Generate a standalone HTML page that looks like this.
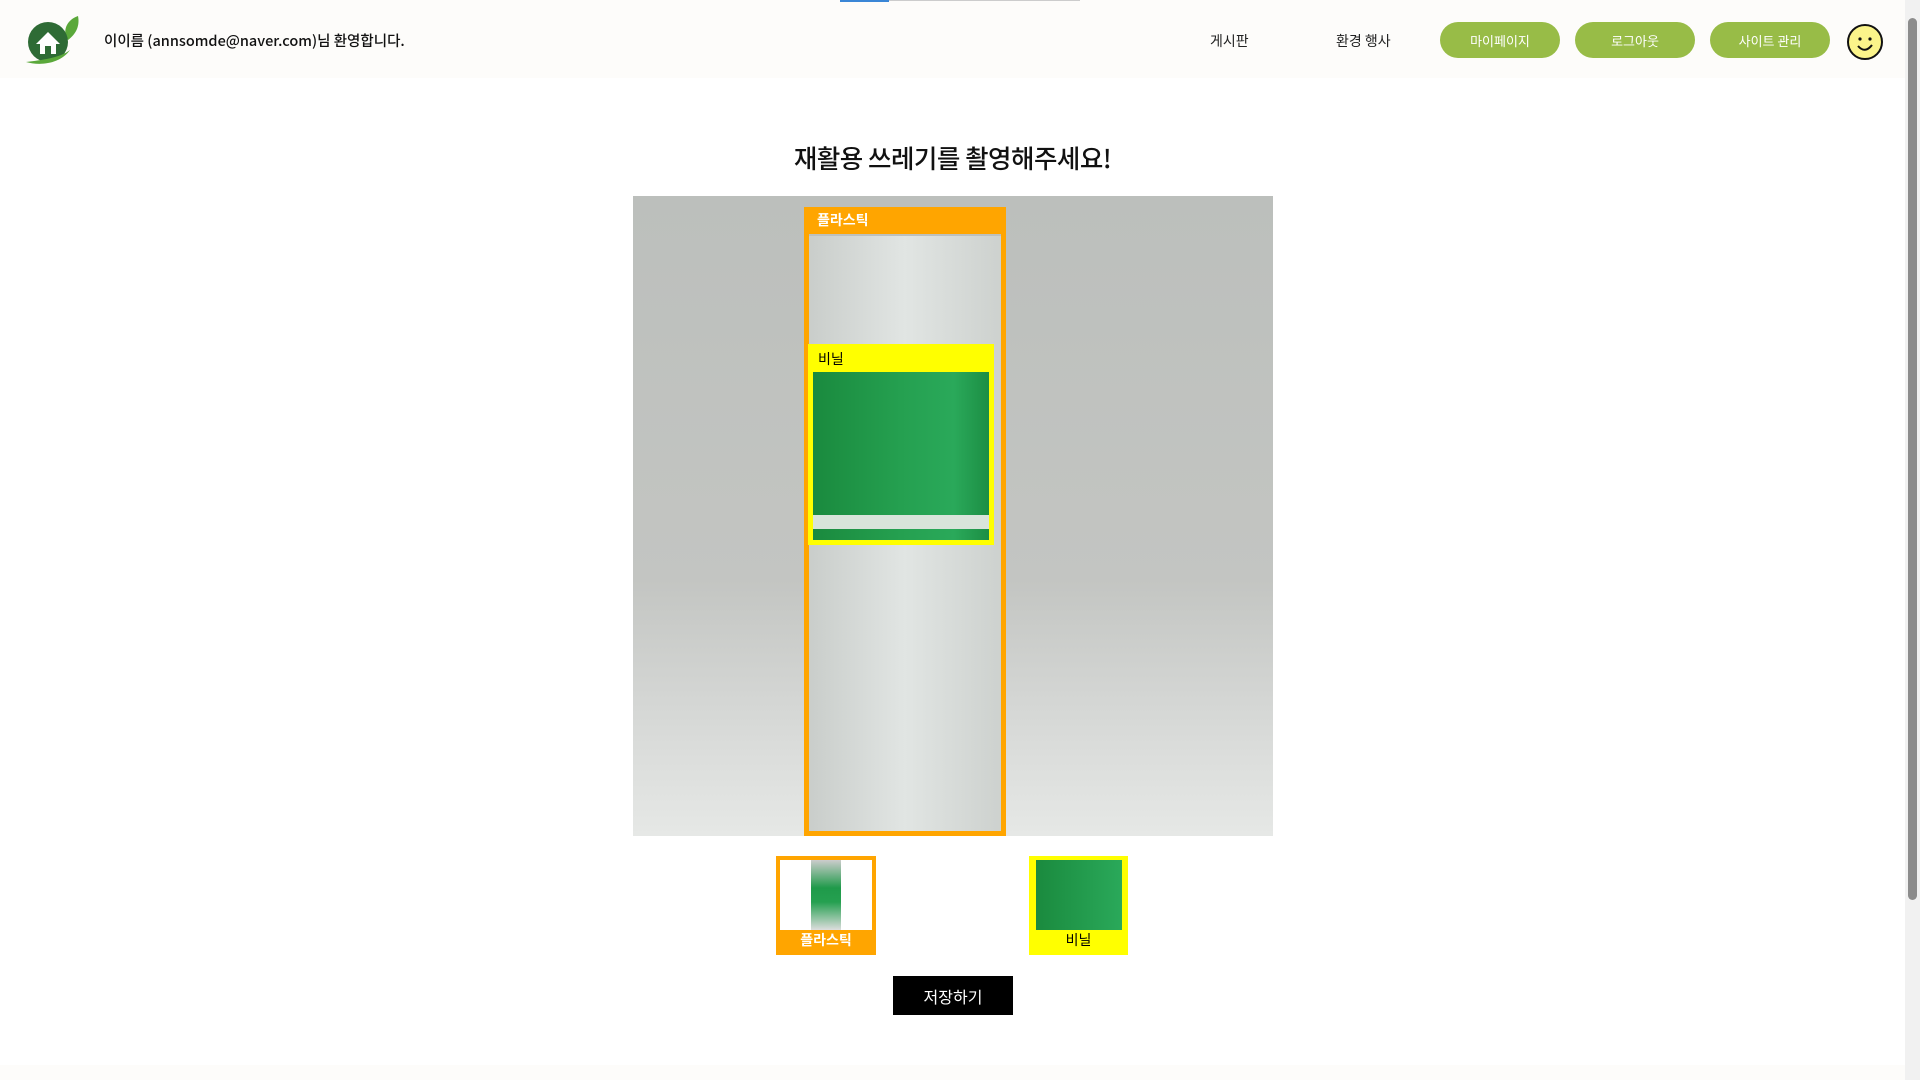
<!DOCTYPE html>
<html><head><meta charset="utf-8"><style>
*{margin:0;padding:0;box-sizing:border-box}
body{width:1920px;height:1080px;overflow:hidden;background:#fff;font-family:"Noto Sans CJK KR","Liberation Sans",sans-serif;position:relative}
.hdr{position:absolute;left:0;top:0;width:1905px;height:78px;background:#fdfcfa}
.abs{position:absolute}
.btn{position:absolute;top:22px;width:120px;height:36px;border-radius:18px;background:#98bc47;color:#fff;font-size:13px;display:flex;align-items:center;justify-content:center}
.nav{position:absolute;top:31px;font-size:14px;color:#222}
</style></head><body>
<div class="hdr"></div>
<div class="abs" style="left:840px;top:0;width:49px;height:2px;background:#3a86d6"></div>
<div class="abs" style="left:889px;top:0;width:191px;height:1px;background:#ccc"></div>
<svg class="abs" style="left:20px;top:14px" width="62" height="54" viewBox="0 0 62 54">
<path d="M58 2 C46 6 42 18 48 26 C56 20 60 12 58 2Z" fill="#5aa83a"/>
<circle cx="28" cy="28" r="20" fill="#2e6b35"/>
<path d="M6 48 C20 52 40 50 50 36 C40 44 22 46 6 48Z" fill="#5aa83a"/>
<path d="M16 30 L28 18 L40 30 L36 30 L36 40 L20 40 L20 30Z" fill="#fff"/>
<rect x="25" y="32" width="6" height="8" fill="#2e6b35"/>
</svg>
<div class="abs" style="left:104px;top:30px;font-size:14.5px;font-weight:500;color:#111">이이름 (annsomde@naver.com)님 환영합니다.</div>
<div class="nav" style="left:1210px">게시판</div>
<div class="nav" style="left:1336px">환경 행사</div>
<div class="btn" style="left:1440px">마이페이지</div>
<div class="btn" style="left:1575px">로그아웃</div>
<div class="btn" style="left:1710px">사이트 관리</div>
<svg class="abs" style="left:1845px;top:22px" width="40" height="40" viewBox="0 0 40 40">
<circle cx="20" cy="20" r="17" fill="#fbf48a" stroke="#111" stroke-width="2"/>
<circle cx="15" cy="17" r="1.6" fill="#111"/><circle cx="25" cy="17" r="1.6" fill="#111"/>
<path d="M13 24 Q20 32 27 23" fill="none" stroke="#111" stroke-width="2"/>
</svg>
<div class="abs" style="left:0;width:1905px;top:139px;text-align:center;font-size:25.5px;font-weight:500;color:#111;letter-spacing:-0.5px">재활용 쓰레기를 촬영해주세요!</div>
<div class="abs" style="left:633px;top:196px;width:640px;height:640px;background:linear-gradient(180deg,#bcbfbc 0%,#c3c5c2 60%,#d5d7d5 80%,#e6e8e6 100%)"></div>
<div class="abs" style="left:808px;top:236px;width:194px;height:595px;background:linear-gradient(90deg,#c9cdca,#e1e5e3 50%,#cdd1ce)"></div>
<div class="abs" style="left:804px;top:207px;width:202px;height:629px;border:5px solid #ffa500;border-top:0"></div>
<div class="abs" style="left:804px;top:207px;width:202px;height:27px;background:#ffa500;color:#fff;font-size:14px;font-weight:bold;padding:3px 0 0 13px">플라스틱</div>
<div class="abs" style="left:808px;top:344px;width:186px;height:201px;background:#ffff00"></div>
<div class="abs" style="left:818px;top:349px;font-size:14px;color:#000">비닐</div>
<div class="abs" style="left:813px;top:372px;width:176px;height:168px;background:linear-gradient(90deg,#1a8a3e,#25a050 50%,#2aa95a 80%,#1c8e44)"></div>
<div class="abs" style="left:813px;top:515px;width:176px;height:14px;background:#d8e4da"></div>
<div class="abs" style="left:776px;top:856px;width:100px;height:99px;background:#ffa500"></div>
<div class="abs" style="left:780px;top:860px;width:92px;height:70px;background:#fff"></div>
<div class="abs" style="left:811px;top:860px;width:30px;height:70px;background:linear-gradient(180deg,#ccc,#1f9a4a 40%,#25a050 60%,#ddd)"></div>
<div class="abs" style="left:776px;top:930px;width:100px;text-align:center;color:#fff;font-size:14px;font-weight:bold">플라스틱</div>
<div class="abs" style="left:1029px;top:856px;width:99px;height:99px;background:#ffff00"></div>
<div class="abs" style="left:1036px;top:860px;width:86px;height:70px;background:linear-gradient(90deg,#1a8a3e,#2aa95a)"></div>
<div class="abs" style="left:1029px;top:930px;width:99px;text-align:center;color:#000;font-size:14px">비닐</div>
<div class="abs" style="left:893px;top:976px;width:120px;height:39px;background:#000;color:#fff;font-size:16px;display:flex;align-items:center;justify-content:center">저장하기</div>
<div class="abs" style="left:0;top:1065px;width:1905px;height:15px;background:#fdfcfa"></div>
<div class="abs" style="left:1905px;top:0;width:15px;height:1080px;background:#f1f1f1"></div>
<div class="abs" style="left:1908px;top:18px;width:9px;height:882px;background:#8c8c8c;border-radius:5px"></div>
</body></html>
